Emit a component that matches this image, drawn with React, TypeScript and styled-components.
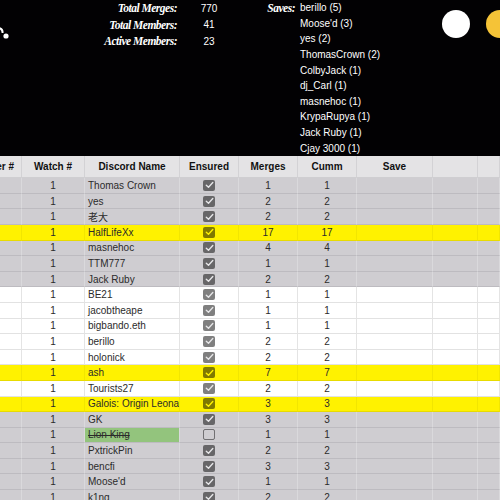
import React from "react";
import styled, { createGlobalStyle } from "styled-components";

const Global = createGlobalStyle`
  html, body { margin: 0; padding: 0; background: #ffffff; overflow: hidden; }
  body { font-family: "Liberation Sans", Arial, sans-serif; }
`;

const Page = styled.div`
  width: 500px;
  height: 500px;
  overflow: hidden;
  display: flex;
  flex-direction: column;
`;

const Header = styled.header`
  flex: 0 0 156px;
  height: 156px;
  background: #020103;
  display: flex;
  align-items: flex-start;
  overflow: hidden;
  color: #ffffff;
  font-size: 10px;
`;

const Decor = styled.div`
  flex: 0 0 22px;
  height: 44px;
`;

const Stats = styled.div`
  display: grid;
  grid-template-columns: 155px 64px;
  grid-auto-rows: 16.5px;
  align-items: center;
`;

const ScriptLabel = styled.span`
  font-family: "Liberation Serif", "Times New Roman", serif;
  font-style: italic;
  font-weight: bold;
  font-size: 11.5px;
  letter-spacing: -0.5px;
  text-align: right;
  white-space: nowrap;
`;

const StatValue = styled.span`
  text-align: center;
`;

const Saves = styled.div`
  display: grid;
  grid-template-columns: 54px 142px;
  column-gap: 5px;
  grid-auto-rows: 15.6px;
  align-items: center;
`;

const SaveName = styled.span`
  grid-column: 2;
  white-space: nowrap;
`;

const Circle = styled.div<{ $color: string; $gap: number }>`
  flex: 0 0 28px;
  width: 28px;
  height: 28px;
  margin-top: 10px;
  margin-left: ${(p) => p.$gap}px;
  border-radius: 50%;
  background: ${(p) => p.$color};
`;

const COLS = "22px 63px 95px 59px 59px 59px 76px 45px 1fr";

type Tone = "gray" | "white" | "yellow" | "head";

const TONES: Record<Tone, { bg: string; h: string; v: string }> = {
  head: { bg: "#e4e3e5", h: "#cfced1", v: "#d3d2d5" },
  gray: { bg: "#cfcdd1", h: "#bdbbc0", v: "#dad9dc" },
  white: { bg: "#ffffff", h: "#e2e2e2", v: "#e4e4e4" },
  yellow: { bg: "#fff200", h: "#e8db00", v: "#f2e600" },
};

const Table = styled.div`
  display: flex;
  flex-direction: column;
`;

const Row = styled.div<{ $tone: Tone; $h: number }>`
  display: grid;
  grid-template-columns: ${COLS};
  height: ${(p) => p.$h}px;
  flex: 0 0 ${(p) => p.$h}px;
  background: ${(p) => TONES[p.$tone].bg};
`;

const Cell = styled.div<{ $tone: Tone; $align?: "left" | "center" | "right"; $green?: boolean }>`
  box-sizing: border-box;
  display: flex;
  align-items: center;
  justify-content: ${(p) =>
    p.$align === "left" ? "flex-start" : p.$align === "right" ? "flex-end" : "center"};
  padding: 0 ${(p) => (p.$align === "right" ? "7px" : "3px")};
  overflow: hidden;
  white-space: nowrap;
  border-right: 1px solid ${(p) => TONES[p.$tone].v};
  border-bottom: 1px solid ${(p) => TONES[p.$tone].h};
  background: ${(p) => (p.$green ? "#93c47d" : "transparent")};
  font-size: 10px;
  color: #2b2b2b;
  font-family: "Liberation Sans", Arial, "Noto Sans CJK SC", sans-serif;
`;

const HeadCell = styled(Cell)`
  font-weight: bold;
  color: #111111;
`;

const Strike = styled.span`
  text-decoration: line-through;
`;

const Box = styled.span<{ $checked: boolean }>`
  box-sizing: border-box;
  width: 12px;
  height: 11px;
  border-radius: 2px;
  display: flex;
  align-items: center;
  justify-content: center;
  background: ${(p) => (p.$checked ? "rgba(0,0,0,0.5)" : "transparent")};
  border: ${(p) => (p.$checked ? "none" : "1.5px solid rgba(0,0,0,0.45)")};
`;

const Check: React.FC<{ checked: boolean; tone: Tone }> = ({ checked, tone }) => (
  <Box $checked={checked}>
    {checked && (
      <svg width="9" height="8" viewBox="0 0 9 8">
        <path
          d="M1.3 4.2 L3.5 6.2 L7.8 1.6"
          fill="none"
          stroke={tone === "yellow" ? "#fff200" : "#e6e6e8"}
          strokeWidth="1.4"
          strokeLinecap="round"
          strokeLinejoin="round"
        />
      </svg>
    )}
  </Box>
);

type Entry = {
  name: string;
  merges: number;
  tone: Tone;
  checked?: boolean;
  green?: boolean;
};

const ROWS: Entry[] = [
  { name: "Thomas Crown", merges: 1, tone: "gray" },
  { name: "yes", merges: 2, tone: "gray" },
  { name: "老大", merges: 2, tone: "gray" },
  { name: "HalfLifeXx", merges: 17, tone: "yellow" },
  { name: "masnehoc", merges: 4, tone: "gray" },
  { name: "TTM777", merges: 1, tone: "gray" },
  { name: "Jack Ruby", merges: 2, tone: "gray" },
  { name: "BE21", merges: 1, tone: "white" },
  { name: "jacobtheape", merges: 1, tone: "white" },
  { name: "bigbando.eth", merges: 1, tone: "white" },
  { name: "berillo", merges: 2, tone: "white" },
  { name: "holonick", merges: 2, tone: "white" },
  { name: "ash", merges: 7, tone: "yellow" },
  { name: "Tourists27", merges: 2, tone: "white" },
  { name: "Galois: Origin Leonardo", merges: 3, tone: "yellow" },
  { name: "GK", merges: 3, tone: "gray" },
  { name: "Lion King", merges: 1, tone: "gray", checked: false, green: true },
  { name: "PxtrickPin", merges: 2, tone: "gray" },
  { name: "bencfi", merges: 3, tone: "gray" },
  { name: "Moose'd", merges: 1, tone: "gray" },
  { name: "k1ng", merges: 2, tone: "gray" },
];

const SAVES = [
  "berillo (5)",
  "Moose'd (3)",
  "yes (2)",
  "ThomasCrown (2)",
  "ColbyJack (1)",
  "dj_Carl (1)",
  "masnehoc (1)",
  "KrypaRupya (1)",
  "Jack Ruby (1)",
  "Cjay 3000 (1)",
];

const HEADS = ["Member #", "Watch #", "Discord Name", "Ensured", "Merges", "Cumm", "Save", "", ""];

export default function App() {
  return (
    <Page>
      <Global />
      <Header>
        <Decor>
          <svg width="22" height="44" viewBox="0 0 22 44">
            <path d="M-1 28 Q3 29 2.5 33" fill="none" stroke="#ffffff" strokeWidth="2" />
            <circle cx="6" cy="36" r="2.6" fill="#ffffff" />
          </svg>
        </Decor>
        <Stats>
          <ScriptLabel>Total Merges:</ScriptLabel>
          <StatValue>770</StatValue>
          <ScriptLabel>Total Members:</ScriptLabel>
          <StatValue>41</StatValue>
          <ScriptLabel>Active Members:</ScriptLabel>
          <StatValue>23</StatValue>
        </Stats>
        <Saves>
          <ScriptLabel>Saves:</ScriptLabel>
          {SAVES.map((s) => (
            <SaveName key={s}>{s}</SaveName>
          ))}
        </Saves>
        <Circle $color="#ffffff" $gap={0} />
        <Circle $color="#f5c337" $gap={16} />
      </Header>
      <Table>
        <Row $tone="head" $h={22.2}>
          {HEADS.map((h, i) => (
            <HeadCell key={i} $tone="head" $align={i === 0 ? "right" : "center"}>
              {h}
            </HeadCell>
          ))}
        </Row>
        {ROWS.map((r, i) => (
          <Row key={i} $tone={r.tone} $h={15.6}>
            <Cell $tone={r.tone} />
            <Cell $tone={r.tone}>1</Cell>
            <Cell $tone={r.tone} $align="left" $green={r.green}>
              {r.green ? <Strike>{r.name}</Strike> : r.name}
            </Cell>
            <Cell $tone={r.tone}>
              <Check checked={r.checked !== false} tone={r.tone} />
            </Cell>
            <Cell $tone={r.tone}>{r.merges}</Cell>
            <Cell $tone={r.tone}>{r.merges}</Cell>
            <Cell $tone={r.tone} />
            <Cell $tone={r.tone} />
            <Cell $tone={r.tone} />
          </Row>
        ))}
      </Table>
    </Page>
  );
}
